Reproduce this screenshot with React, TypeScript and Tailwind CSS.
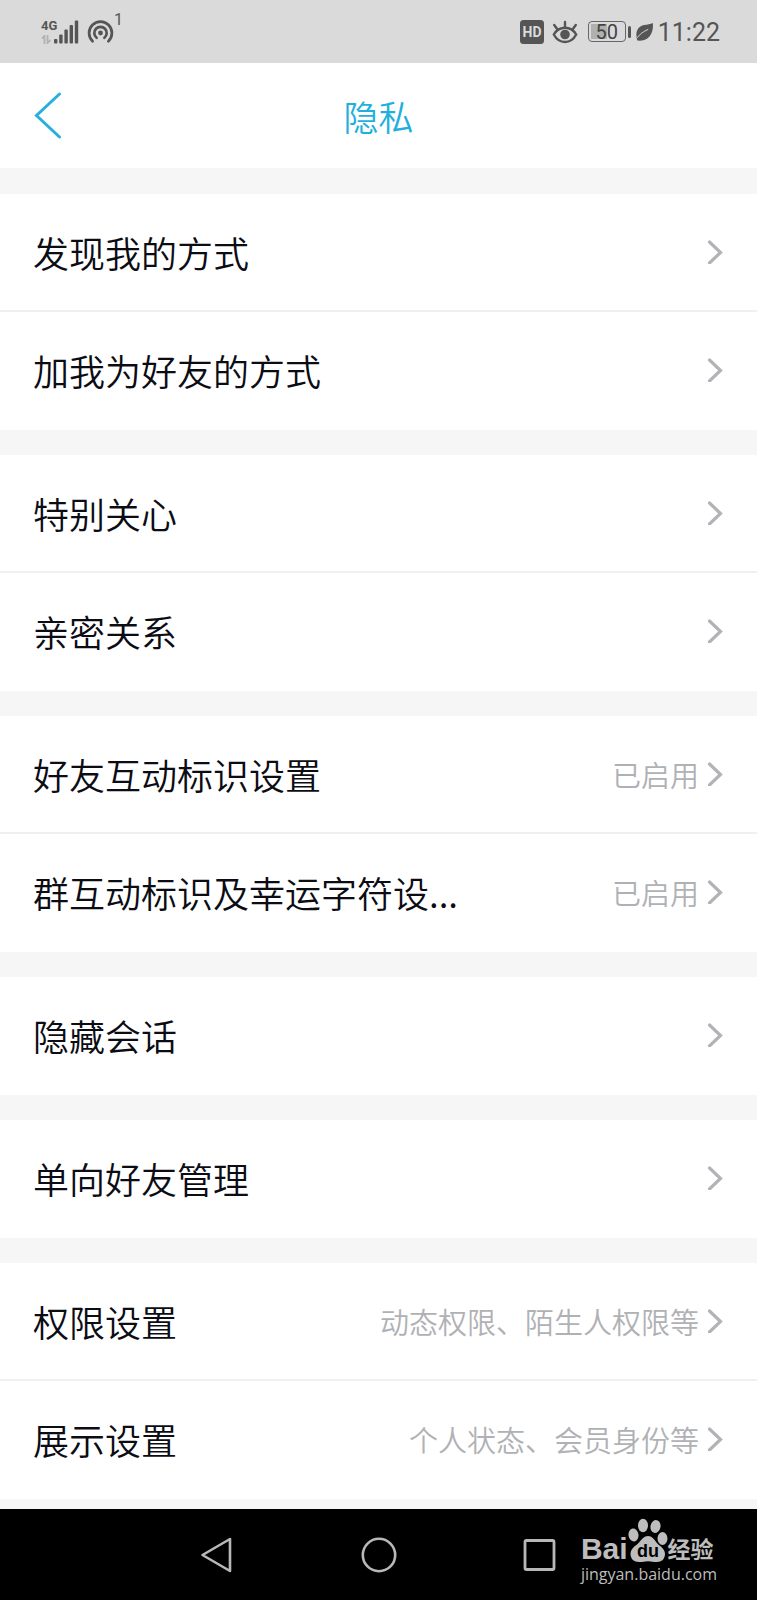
import React from 'react';

interface SettingItem {
  label: string;
  value?: string;
}

const groups: SettingItem[][] = [
  [{ label: '发现我的方式' }, { label: '加我为好友的方式' }],
  [{ label: '特别关心' }, { label: '亲密关系' }],
  [
    { label: '好友互动标识设置', value: '已启用' },
    { label: '群互动标识及幸运字符设...', value: '已启用' },
  ],
  [{ label: '隐藏会话' }],
  [{ label: '单向好友管理' }],
  [
    { label: '权限设置', value: '动态权限、陌生人权限等' },
    { label: '展示设置', value: '个人状态、会员身份等' },
  ],
];

const StatusBar: React.FC = () => (
  <div className="flex h-[63px] items-center justify-between bg-[#dadada] pl-[41px] pr-[37px] font-['Roboto',sans-serif] text-[#555]">
    <div className="flex h-10 items-center">
      {/* network type, data arrows and signal strength */}
      <div className="flex h-6 items-end">
        <div className="flex h-6 w-[13px] flex-col justify-between">
          <span className="text-[13px] font-bold leading-[12px]">4G</span>
          <svg className="h-[9px] w-[11px]" viewBox="0 0 11 9" fill="none" stroke="#b2b2b2" strokeWidth="1.8">
            <path d="M1 3.5 3.5 1v8M6.5 0v8L9.5 5" />
          </svg>
        </div>
        <svg className="h-6 w-[25px]" viewBox="0 0 25 24" fill="currentColor">
          <rect x="0" y="19" width="3.4" height="4.5" rx="1" />
          <rect x="5.2" y="14.5" width="3.4" height="9" rx="1" />
          <rect x="10.4" y="9.5" width="3.4" height="14" rx="1" />
          <rect x="15.6" y="5" width="3.4" height="18.5" rx="1" />
          <rect x="20.8" y="0.5" width="3.4" height="23" rx="1" />
        </svg>
      </div>
      <svg className="ml-2 h-6 w-[27px]" viewBox="0 0 27 24" fill="none" stroke="currentColor" strokeWidth="2.7" strokeLinecap="round">
        <circle cx="13.5" cy="13" r="2.4" fill="currentColor" stroke="none" />
        <path d="M9.6 17.8a6.2 6.2 0 1 1 7.8 0" />
        <path d="M5.6 21.2a11.4 11.4 0 1 1 15.8 0" />
      </svg>
      <span className="self-start text-[16px] leading-[16px]">1</span>
    </div>

    <div className="flex items-center">
      <svg className="h-6 w-6" viewBox="0 0 24 24">
        <rect width="24" height="24" rx="3.5" fill="#555" />
        <text x="12" y="17" textAnchor="middle" fontSize="14" fontWeight="700" fill="#dadada">
          HD
        </text>
      </svg>
      <svg className="ml-2 h-6 w-[26px]" viewBox="0 0 26 24" fill="none" stroke="currentColor" strokeWidth="2.4" strokeLinecap="round">
        <path d="M1.8 14.5C4.5 10 8.5 7.8 13 7.8s8.5 2.2 11.2 6.7C21.5 19.5 17.5 22 13 22S4.5 19.5 1.8 14.5Z" />
        <path d="M13 7V2M5.5 9.5 2.2 5M20.5 9.5 23.8 5" />
        <circle cx="13" cy="14.5" r="4.8" fill="currentColor" stroke="none" />
      </svg>
      <div className="ml-[10px] flex items-center">
        <div className="relative h-[21px] w-[38px] rounded-[4px] border border-[#666] text-center text-[20px] leading-[20px] text-[#444]">
          <span className="absolute inset-y-[2px] left-[2px] w-4 bg-[#b0b0b0]" />
          <span className="relative">50</span>
        </div>
        <span className="ml-[2px] h-3 w-[3px] rounded-sm bg-[#555]" />
      </div>
      <svg className="ml-[5px] h-[18px] w-[17px]" viewBox="0 0 16 17">
        <path d="M1.2 16.6C-1.2 9 1.5 3.2 7.5 2 11 1.3 13.5 1.3 15.9 0c.4 4.5-.3 9.5-3.4 12.9-2.5 2.7-6.5 4.2-11.3 3.7Z" fill="#555" />
        <path d="M1 14C3.5 10.5 7 8 11.5 6" stroke="#dadada" strokeWidth="0.9" fill="none" />
      </svg>
      <span className="ml-[5px] pt-[2px] text-[25px] leading-[30px]">11:22</span>
    </div>
  </div>
);

const Row: React.FC<{ item: SettingItem; divided: boolean }> = ({ item, divided }) => (
  <li>
    <a
      href="#"
      className={`flex h-[118px] items-center justify-between border-b-2 bg-white pl-[33px] pr-[34px] ${
        divided ? 'border-[#f0f0f2]' : 'border-white'
      }`}
    >
      <span className="whitespace-nowrap text-[36px] font-[350] leading-[54px] text-[#0b0c14]">{item.label}</span>
      <span className="flex items-center gap-2">
        {item.value && (
          <span className="whitespace-nowrap text-[29px] font-[350] leading-[44px] text-[#b0b1b5]">{item.value}</span>
        )}
        <svg className="h-6 w-4" viewBox="0 0 16 24" fill="none" stroke="#b2b3b6" strokeWidth="3.2" strokeLinecap="round">
          <path d="m2.5 2 11 10.5L2.5 23" />
        </svg>
      </span>
    </a>
  </li>
);

const Watermark: React.FC = () => (
  <div className="absolute right-[40px] top-[9px] text-[#bdbdbd]">
    <div className="flex h-[45px] items-end">
      <span className="font-['Liberation_Sans',sans-serif] text-[30px] font-bold leading-[28px]">Bai</span>
      <svg className="h-[45px] w-10" viewBox="0 0 40 45" fill="currentColor">
        <ellipse cx="5.5" cy="17" rx="5" ry="6.5" transform="rotate(-8 5.5 17)" />
        <ellipse cx="15" cy="7.5" rx="5" ry="6.8" />
        <ellipse cx="27.5" cy="8.5" rx="5" ry="6.5" transform="rotate(12 27.5 8.5)" />
        <ellipse cx="34.5" cy="20.5" rx="5" ry="6.5" />
        <path d="M20 18c4 0 6 3 8.5 6.5S37 30 37 36c0 5-3.5 8-8 8-3.5 0-5.5-.8-9-.8s-5.5.8-9 .8c-5 0-8.5-3-8.5-8 0-6 5.5-8 8.5-11.5S16 18 20 18Z" />
        <text x="20" y="39" textAnchor="middle" fontFamily="Liberation Sans" fontSize="18" fontWeight="700" fill="#000">
          du
        </text>
      </svg>
      <span className="text-[23px] font-bold leading-[29px]">经验</span>
    </div>
    <div className="text-center font-['Open_Sans',sans-serif] text-[16px] leading-[22px]">jingyan.baidu.com</div>
  </div>
);

const NavBar: React.FC = () => (
  <nav className="relative flex h-[91px] items-center justify-center gap-[125px] bg-black">
    <button aria-label="返回">
      <svg className="h-9 w-9" viewBox="0 0 36 36" fill="none" stroke="#b8b8b8" strokeWidth="2.6" strokeLinejoin="round">
        <path d="M30 2v32L2.5 18Z" />
      </svg>
    </button>
    <button aria-label="主页">
      <svg className="h-9 w-9" viewBox="0 0 36 36" fill="none" stroke="#b8b8b8" strokeWidth="2.6">
        <circle cx="18" cy="18" r="16.2" />
      </svg>
    </button>
    <button aria-label="最近任务">
      <svg className="h-9 w-9" viewBox="0 0 36 36" fill="none" stroke="#b8b8b8" strokeWidth="2.8">
        <rect x="3" y="3.5" width="29" height="29" rx="1.5" />
      </svg>
    </button>
    <Watermark />
  </nav>
);

const App: React.FC = () => {
  return (
    <div className="flex min-h-screen flex-col bg-[#f6f6f7] font-['Noto_Sans_CJK_SC',sans-serif]">
      <StatusBar />
      <header className="grid h-[105px] grid-cols-[1fr_auto_1fr] items-center bg-white px-[33px]">
        <button aria-label="返回" className="justify-self-start">
          <svg className="h-12 w-8" viewBox="0 0 32 48" fill="none" stroke="#28b0dc" strokeWidth="3" strokeLinecap="round">
            <path d="M26.5 2 3.5 23.5l23 21.5" />
          </svg>
        </button>
        <h1 className="text-[35px] font-[350] leading-[52px] text-[#1fb0dd]">隐私</h1>
      </header>
      <main className="flex flex-1 flex-col gap-[25px] pb-[10px] pt-[26px]">
        {groups.map((group, i) => (
          <ul key={i}>
            {group.map((item, j) => (
              <Row key={item.label} item={item} divided={j < group.length - 1} />
            ))}
          </ul>
        ))}
      </main>
      <NavBar />
    </div>
  );
};

export default App;
